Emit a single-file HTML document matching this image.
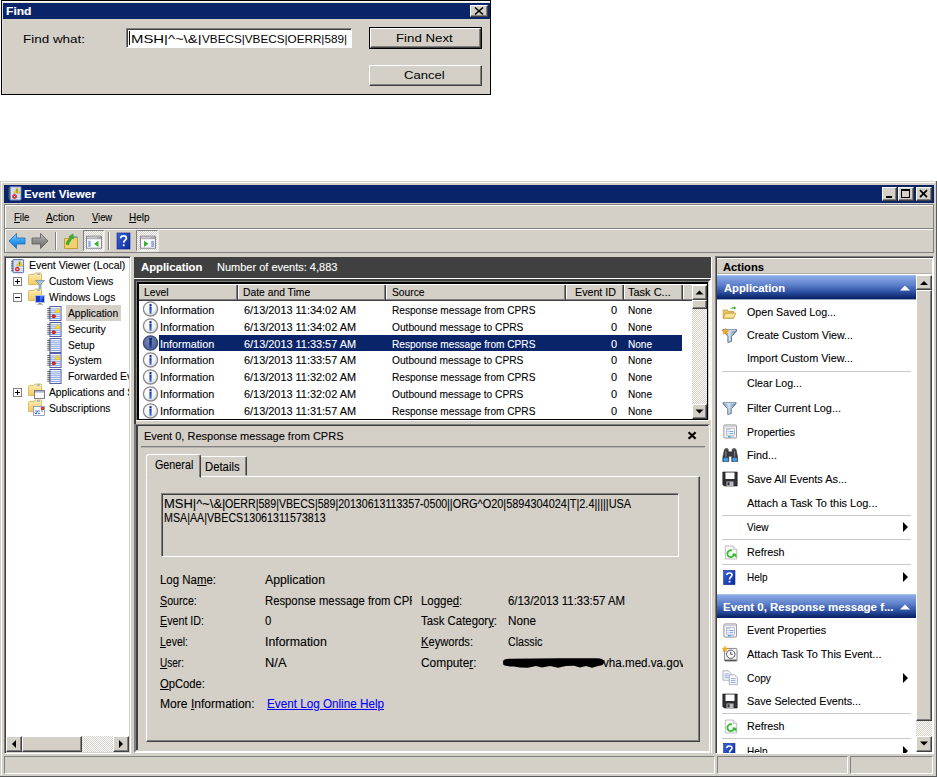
<!DOCTYPE html>
<html>
<head>
<meta charset="utf-8">
<title>Event Viewer</title>
<style>
*{box-sizing:border-box;margin:0;padding:0}
html,body{width:937px;height:777px;background:#fff;overflow:hidden}
body{font-family:"Liberation Sans",sans-serif;font-size:11px;color:#000;position:relative}
.a{position:absolute}
.t{position:absolute;white-space:nowrap;line-height:14px;height:14px;-webkit-text-stroke:.1px currentColor}
.b{font-weight:bold}
.f{-webkit-text-stroke:0}
.n{transform:scaleX(.935);transform-origin:0 0}
.nr{transform:scaleX(.935);transform-origin:100% 0}
.w{color:#fff}
u{text-decoration:underline}
/* classic raised button */
.btn{position:absolute;background:#d4d0c8;border:1px solid;border-color:#fff #404040 #404040 #fff;box-shadow:inset -1px -1px 0 #808080}
.sunk{position:absolute;border:1px solid;border-color:#808080 #fff #fff #808080}
.dot{background-image:repeating-conic-gradient(#fff 0 25%,#d4d0c8 0 50%);background-size:2px 2px}
/* find dialog */
#find{left:1px;top:0;width:490px;height:95px;background:#d4d0c8;border:1px solid #000}
.ft{letter-spacing:1.1px}
/* main window */
#win{left:0;top:181px;width:937px;height:596px;background:#d4d0c8}
.s12{font-size:12px;line-height:15px;height:15px}
</style>
</head>
<body>

<!-- ================= FIND DIALOG ================= -->
<div id="find" class="a"></div>
<div class="a" style="left:2px;top:1px;width:488px;height:1px;background:#fff"></div><div class="a" style="left:2px;top:2px;width:488px;height:1px;background:#e8e6e0"></div>
<div class="a" style="left:2px;top:2px;width:1px;height:92px;background:#e0ded6"></div>
<div class="a" style="left:3px;top:3px;width:487px;height:16px;background:#0a246a"></div>
<div class="t b w" style="left:5.500px;top:4px;transform:scaleX(1.0983);transform-origin:0 0">Find</div>
<div class="btn" style="left:470px;top:5px;width:18px;height:12px"></div>
<svg class="a" style="left:470px;top:5px" width="18" height="12"><path d="M5 2.5 L13 9.5 M13 2.5 L5 9.5" stroke="#000" stroke-width="1.6" fill="none"/></svg>
<div class="t f" style="left:23.400px;top:32px;transform:scaleX(1.2217);transform-origin:0 0">Find what:</div>
<div class="a" style="left:126px;top:28px;width:226px;height:20px;background:#fff;border:1px solid;border-color:#808080 #fff #fff #808080;box-shadow:inset 1px 1px 0 #404040"></div>
<div class="t f" style="left:130.800px;top:32px;transform:scaleX(1.3521);transform-origin:0 0">MSH|^~\&amp;|</div><div class="t f" style="left:201.700px;top:32px;transform:scaleX(1.0650);transform-origin:0 0">VBECS|VBECS|OERR|589|</div>
<div class="a" style="left:129px;top:31px;width:1px;height:14px;background:#000"></div>
<div class="a" style="left:369px;top:27px;width:113px;height:22px;border:1px solid #000"></div>
<div class="btn" style="left:370px;top:28px;width:111px;height:20px"></div>
<div class="t f" style="left:396px;top:31px;transform:scaleX(1.2044);transform-origin:0 0">Find Next</div>
<div class="btn" style="left:369px;top:65px;width:113px;height:21px"></div>
<div class="t f" style="left:403.800px;top:68px;transform:scaleX(1.1883);transform-origin:0 0">Cancel</div>

<!-- ================= MAIN WINDOW ================= -->
<div id="win" class="a"></div>
<!-- frame edges -->
<div class="a" style="left:1px;top:182px;width:934px;height:1px;background:#fff"></div>
<div class="a" style="left:1px;top:182px;width:1px;height:593px;background:#fff"></div>
<div class="a" style="left:936px;top:181px;width:1px;height:596px;background:#5a5a5a"></div>
<div class="a" style="left:0;top:776px;width:937px;height:1px;background:#5a5a5a"></div>
<!-- title bar -->
<div class="a" style="left:4px;top:185px;width:930px;height:18px;background:#0a246a"></div>
<svg class="a" style="left:6.500px;top:186.300px" width="15.500" height="15.500" viewBox="0 0 16 16"><use href="#evroot"/></svg>
<div class="t b w" style="left:24.300px;top:187px;transform:scaleX(1.0501);transform-origin:0 0">Event Viewer</div>
<div class="btn" style="left:882px;top:187px;width:15px;height:14px"></div>
<div class="a" style="left:886px;top:196px;width:6px;height:2px;background:#000"></div>
<div class="btn" style="left:898px;top:187px;width:16px;height:14px"></div>
<div class="a" style="left:901px;top:189px;width:9px;height:9px;border:1px solid #000;border-top-width:2px"></div>
<div class="btn" style="left:916px;top:187px;width:16px;height:14px"></div>
<svg class="a" style="left:916px;top:187px" width="16" height="14"><path d="M4 3.2 L11 10.2 M11 3.2 L4 10.2" stroke="#000" stroke-width="1.7" fill="none"/></svg>
<!-- menu band -->
<div class="a" style="left:4px;top:204px;width:930px;height:25px;border:1px solid;border-color:#808080 #808080 #808080 #808080;box-shadow:inset 1px 1px 0 #fff"></div>
<div class="t" style="left:14px;top:210px;transform:scaleX(0.8676);transform-origin:0 0"><u>F</u>ile</div>
<div class="t" style="left:46.400px;top:210px;transform:scaleX(0.9250);transform-origin:0 0"><u>A</u>ction</div>
<div class="t" style="left:91.500px;top:210px;transform:scaleX(0.8497);transform-origin:0 0"><u>V</u>iew</div>
<div class="t" style="left:128.700px;top:210px;transform:scaleX(0.9055);transform-origin:0 0"><u>H</u>elp</div>
<!-- toolbar band -->
<div class="a" style="left:4px;top:228px;width:930px;height:25px;border:1px solid #808080;box-shadow:inset 1px 1px 0 #fff"></div>
<!-- toolbar icons -->
<svg class="a" style="left:6px;top:230px" width="160" height="22" viewBox="0 0 160 22">
 <defs>
  <linearGradient id="gb" x1="0" y1="0" x2="0" y2="1"><stop offset="0" stop-color="#8fd0ff"/><stop offset=".5" stop-color="#2f9cf0"/><stop offset="1" stop-color="#1672c8"/></linearGradient>
  <linearGradient id="gg" x1="0" y1="0" x2="0" y2="1"><stop offset="0" stop-color="#c8c8c8"/><stop offset=".5" stop-color="#8c8c8c"/><stop offset="1" stop-color="#6e6e6e"/></linearGradient>
  <linearGradient id="gh" x1="0" y1="0" x2="1" y2="1"><stop offset="0" stop-color="#3a66d8"/><stop offset="1" stop-color="#0a2a9a"/></linearGradient>
  <pattern id="dp" width="2" height="2" patternUnits="userSpaceOnUse"><rect width="2" height="2" fill="#d4d0c8"/><rect width="1" height="1" fill="#fff"/><rect x="1" y="1" width="1" height="1" fill="#fff"/></pattern>
 </defs>
 <!-- back -->
 <path d="M3 11 L10.5 3.5 V8 H19 V14 H10.5 V18.5 Z" fill="url(#gb)" stroke="#1a6fc0" stroke-width=".8"/>
 <!-- forward -->
 <path d="M42 11 L34.5 3.5 V8 H26 V14 H34.5 V18.5 Z" fill="url(#gg)" stroke="#5a5a5a" stroke-width=".8"/>
 <!-- sep -->
 <rect x="49" y="2" width="1" height="18" fill="#808080"/><rect x="50" y="2" width="1" height="18" fill="#fff"/>
 <!-- folder up -->
 <path d="M58.5 8.5 H63 L64 7 H71.5 V18.5 H58.5 Z" fill="#f0d070" stroke="#c09a30" stroke-width=".9"/>
 <path d="M60 14 C61 10 63 9.5 64.5 7.5 L62.8 6.8 L67 4 L67.5 9 L66 8.3 C65 11 63 12 62.5 15 Z" fill="#3ab030" stroke="#2a8a20" stroke-width=".5"/>
 <rect x="68" y="6.5" width="3" height="1.2" fill="#4a90e0"/>
 <!-- checked button 1 -->
 <rect x="77" y="0" width="21" height="21" fill="url(#dp)"/>
 <path d="M77.5 21 V.5 H98" stroke="#808080" fill="none"/><path d="M98 .5 V21 H77.5" stroke="#fff" fill="none" transform="translate(0,0)"/>
 <rect x="80.5" y="6.200" width="15" height="12" fill="#fafafa" stroke="#86868c"/>
 <rect x="81" y="6.700" width="14" height="2.500" fill="#a8a8ae"/><rect x="81" y="7.400" width="10" height=".8" fill="#e0e0e4"/>
 <rect x="81.500" y="10.200" width="4" height="7.500" fill="#e8ecf4"/>
 <path d="M82.300 12H84.700M82.300 14H84.700M82.300 16H84.700" stroke="#3a70d8" stroke-width="1"/>
 <path d="M92.500 10.700 V17 L88 13.800 Z" fill="#38b030"/>
 <!-- sep2 -->
 <rect x="102" y="2" width="1" height="18" fill="#808080"/><rect x="103" y="2" width="1" height="18" fill="#fff"/>
 <!-- help -->
 <rect x="111" y="3" width="13" height="16" fill="url(#gh)" stroke="#0a1f80" stroke-width=".6"/>
 <path d="M114.800 8.200 C114.800 5.200 120.400 5.200 120.400 8.200 C120.400 10.200 117.700 10.300 117.700 12.800" fill="none" stroke="#fff" stroke-width="1.700"/>
 <rect x="116.800" y="14.300" width="1.800" height="1.900" fill="#fff"/>
 <!-- checked button 2 -->
 <rect x="130" y="0" width="22" height="21" fill="url(#dp)"/>
 <path d="M130.500 21 V.5 H152" stroke="#808080" fill="none"/><path d="M152 .5 V21 H130.500" stroke="#fff" fill="none"/>
 <rect x="134.500" y="6.200" width="15" height="12" fill="#fafafa" stroke="#86868c"/>
 <rect x="135" y="6.700" width="14" height="2.500" fill="#a8a8ae"/><rect x="135" y="7.400" width="10" height=".8" fill="#e0e0e4"/>
 <rect x="144.500" y="10.200" width="4.500" height="7.500" fill="#e8ecf4"/>
 <path d="M145.300 12H148M145.300 14H148M145.300 16H148" stroke="#3a70d8" stroke-width="1"/>
 <path d="M138 10.700 V17 L142.500 13.800 Z" fill="#38b030"/>
</svg>
<!-- svg symbol defs -->
<svg width="0" height="0" style="position:absolute">
 <defs>
  <linearGradient id="fg" x1="0" y1="0" x2="0" y2="1"><stop offset="0" stop-color="#fdf0b8"/><stop offset="1" stop-color="#f0c860"/></linearGradient>
  <symbol id="folder" viewBox="0 0 16 16">
   <path d="M.5 3.500 Q.5 2.500 1.500 2.500 H6 L7 1 H13 Q13.500 1 13.500 1.800 V12.500 H.5Z" fill="url(#fg)" stroke="#d8b050" stroke-width=".8"/>
   <rect x="9" y="1.600" width="3" height="1" fill="#58a0f0"/>
  </symbol>
  <symbol id="log" viewBox="0 0 16 16">
   <rect x="3" y=".5" width="11.500" height="14.500" fill="#fff" stroke="#4a5aa4" stroke-width="1"/>
   <path d="M4 3H14M4 5H14M4 7H14M4 9H14M4 11H14M4 13H14" stroke="#6088d8" stroke-width=".85"/>
   <path d="M.3 2.500H3.800M.3 4.500H3.800M.3 6.500H3.800M.3 8.500H3.800M.3 10.500H3.800M.3 12.500H3.800" stroke="#48484c" stroke-width=".95"/>
  </symbol>
  <symbol id="logw" viewBox="0 0 16 16">
   <use href="#log"/>
   <path d="M11 1.800L13.800 6.800H8.200Z" fill="#f8dc28" stroke="#e4b400" stroke-width=".4"/>
   <circle cx="7" cy="10.600" r="2.100" fill="#cc2830"/>
  </symbol>
  <symbol id="evroot" viewBox="0 0 16 16">
   <rect x="3" y=".6" width="11.500" height="14" rx=".8" fill="#c4d4f0" stroke="#5468a8" stroke-width="1"/>
   <path d="M4 3H14M4 5H14M4 7H14M4 9H14M4 11H14M4 13H14" stroke="#e4ecfa" stroke-width=".9"/>
   <path d="M1 2.500H3.600M1 4.500H3.600M1 6.500H3.600M1 8.500H3.600M1 10.500H3.600M1 12.500H3.600" stroke="#5a5a60" stroke-width="1"/>
   <path d="M10.300 1.800L13.400 7.300H7.200Z" fill="#f8dc28" stroke="#c8a000" stroke-width=".5"/>
   <rect x="9.850" y="3.600" width=".9" height="2.200" fill="#333"/><rect x="9.850" y="6.100" width=".9" height=".7" fill="#333"/>
   <circle cx="7.800" cy="10.800" r="2.300" fill="#d8232a" stroke="#b01018" stroke-width=".3"/>
   <path d="M7 10L8.600 11.600M8.600 10L7 11.600" stroke="#fff" stroke-width=".8"/>
  </symbol>
  <radialGradient id="inorm" cx=".38" cy=".35" r=".75"><stop offset="0" stop-color="#fff"/><stop offset=".6" stop-color="#f4f4f6"/><stop offset="1" stop-color="#c0c0c6"/></radialGradient>
  <radialGradient id="isel" cx=".4" cy=".4" r=".7"><stop offset="0" stop-color="#7686b6"/><stop offset="1" stop-color="#4c5c90"/></radialGradient>
  <linearGradient id="ib" x1="0" y1="0" x2="0" y2="1"><stop offset="0" stop-color="#1434a4"/><stop offset="1" stop-color="#4a7ce4"/></linearGradient>
  <linearGradient id="ibs" x1="0" y1="0" x2="0" y2="1"><stop offset="0" stop-color="#0a1f66"/><stop offset="1" stop-color="#2c4ca8"/></linearGradient>
  <symbol id="info" viewBox="0 0 17 17">
   <circle cx="8.500" cy="8.900" r="7.100" fill="url(#inorm)" stroke="#8a8a8e" stroke-width="1.300"/>
   <rect x="7.400" y="6.500" width="2.200" height="7.300" fill="url(#ib)"/><rect x="7.400" y="4.100" width="2.200" height="1.900" fill="#1434a4"/>
  </symbol>
  <symbol id="infos" viewBox="0 0 17 17">
   <circle cx="8.500" cy="8.900" r="7.100" fill="url(#isel)" stroke="#3c4a78" stroke-width="1.300"/>
   <rect x="7.300" y="6.400" width="2.500" height="7.500" fill="url(#ibs)"/><rect x="7.300" y="4" width="2.500" height="2" fill="#0a1f66"/>
  </symbol>
  <linearGradient id="fun" x1="0" y1="0" x2="1" y2="0"><stop offset="0" stop-color="#6c8cb0"/><stop offset=".45" stop-color="#d4e4f4"/><stop offset="1" stop-color="#5c7c9c"/></linearGradient>
  <symbol id="funnel" viewBox="0 0 16 16">
   <path d="M.8 1.800 H15.200 V3 L9.900 8.500 V13.800 L6.100 15 V8.500 L.8 3 Z" fill="url(#fun)" stroke="#486480" stroke-width=".9"/>
   <path d="M1.500 2.400H14.500" stroke="#dce8f4" stroke-width=".9"/>
  </symbol>
  <symbol id="funstar" viewBox="0 0 16 16">
   <use href="#funnel"/>
   <path d="M3.500 0L4.500 2.200L7 2.500L5.200 4.200L5.800 6.800L3.500 5.400L1.200 6.800L1.800 4.200L0 2.500L2.500 2.200Z" fill="#ffa818" stroke="#e88800" stroke-width=".3"/>
  </symbol>
  <symbol id="openf" viewBox="0 0 16 16">
   <path d="M1 14.500V5.500H5.500L6.500 7H12.500V14.500Z" fill="#e8c868" stroke="#b89030" stroke-width=".8"/>
   <path d="M1 14.500L3.500 9H15L12.500 14.500Z" fill="#f8e498" stroke="#b89030" stroke-width=".8"/>
   <path d="M9 4.500C10 2.500 12 2.300 13 2.800V1.300L15.500 3.300L13 5.300V4C12 3.600 10.500 3.600 9 4.500Z" fill="#38b030"/>
  </symbol>
  <symbol id="props" viewBox="0 0 16 16">
   <rect x="1" y=".8" width="14" height="14.400" rx="1.300" fill="#fafafc" stroke="#84848c" stroke-width="1"/>
   <rect x="1.800" y="1.600" width="12.400" height="1.800" fill="#d0d0d8"/>
   <rect x="3.800" y="5" width="9" height="7" fill="#fff" stroke="#9098b0" stroke-width=".7"/>
   <rect x="4.500" y="5.400" width="3.500" height="1.300" fill="#c0c4d0"/>
   <path d="M5 8H6M7 8H11.500M5 10H6M7 10H11.500" stroke="#5888e0" stroke-width=".9"/>
   <rect x="5.500" y="13" width="3" height="1.500" fill="#20a8f0"/><rect x="9" y="13" width="3" height="1.500" fill="#c8c8d0"/>
  </symbol>
  <symbol id="binoc" viewBox="0 0 17 17">
   <path d="M2.500 2.500H6.500V5H10.500V2.500H14.500L16.200 11V15H10V9.500H7V15H.8V11Z" fill="#3a3a40" stroke="#222" stroke-width=".5"/>
   <rect x="3.200" y="1.200" width="2.800" height="2" fill="#555"/><rect x="11" y="1.200" width="2.800" height="2" fill="#555"/>
   <path d="M4 4V10M13 4V10" stroke="#8a8a90" stroke-width="1.100"/>
   <ellipse cx="3.900" cy="13" rx="2.600" ry="2.200" fill="#38a0f0"/><ellipse cx="13.100" cy="13" rx="2.600" ry="2.200" fill="#38a0f0"/>
  </symbol>
  <symbol id="floppy" viewBox="0 0 16 16">
   <path d="M.8 1H15.200V15H2.300L.8 13.500Z" fill="#303034" stroke="#111" stroke-width=".6"/>
   <rect x="3.500" y="1.500" width="9" height="6.500" fill="#fff"/>
   <rect x="4.500" y="10.500" width="7" height="4.500" fill="#b8b8c0"/><rect x="5.500" y="11.300" width="2" height="3" fill="#303034"/>
  </symbol>
  <symbol id="refresh" viewBox="0 0 16 16">
   <path d="M1.500 .6H10.500L14.500 4.600V15.400H1.500Z" fill="#fcfcfc" stroke="#a4a4ac" stroke-width=".8"/>
   <path d="M10.500 .6V4.600H14.500" fill="#e4e4e8" stroke="#a4a4ac" stroke-width=".6"/>
   <path d="M11.600 9.200A3.900 3.900 0 1 1 9 5.700" fill="none" stroke="#38bc30" stroke-width="2.200"/>
   <path d="M8.600 9.300H14.200V14Z" fill="#38bc30"/>
  </symbol>
  <symbol id="helpi" viewBox="0 0 13 16">
   <rect x=".4" y=".4" width="12.200" height="15.200" fill="url(#gh)" stroke="#0a1f80" stroke-width=".6"/>
   <path d="M3.800 5.400C3.800 2.400 9.400 2.400 9.400 5.400C9.400 7.400 6.700 7.500 6.700 10" fill="none" stroke="#fff" stroke-width="1.700"/>
   <rect x="5.800" y="11.500" width="1.800" height="1.900" fill="#fff"/>
  </symbol>
  <symbol id="clock" viewBox="0 0 17 17">
   <rect x="2.500" y="2.500" width="13" height="13" rx="1" fill="#f4f4f6" stroke="#7a7a82" stroke-width=".9"/>
   <rect x="3" y="14" width="12" height="1.500" fill="#555"/>
   <circle cx="9" cy="8.500" r="4.300" fill="#fff" stroke="#50505a" stroke-width="1"/>
   <path d="M9 5.800V8.500H11" stroke="#333" stroke-width=".9" fill="none"/>
   <path d="M3 0L3.900 2L6 2.300L4.500 3.800L5 6L3 4.800L1 6L1.500 3.800L0 2.300L2.100 2Z" fill="#ffa818" stroke="#e88800" stroke-width=".3"/>
  </symbol>
  <symbol id="copy" viewBox="0 0 17 16">
   <path d="M1 .8H6.500L9 3.300V10.500H1Z" fill="#fff" stroke="#9098a8" stroke-width=".8"/>
   <path d="M2.500 4H7M2.500 6H7M2.500 8H7" stroke="#6888d8" stroke-width=".8"/>
   <path d="M7.500 5H13L15.800 7.800V15.200H7.500Z" fill="#fff" stroke="#9098a8" stroke-width=".8"/>
   <path d="M9 9H14M9 11H14M9 13H14" stroke="#6888d8" stroke-width=".8"/>
  </symbol>
 </defs>
</svg>
<!-- tree pane -->
<div class="a" style="left:4px;top:256px;width:127px;height:498px;background:#fff;border:1px solid;border-color:#808080 #fff #fff #808080;box-shadow:inset 1px 1px 0 #404040,inset -1px -1px 0 #d4d0c8"></div>
<div class="a" style="left:66px;top:305px;width:55px;height:16px;background:#d4d0c8"></div>
<div class="a" style="left:6px;top:258px;width:123px;height:160px;overflow:hidden">
 <div class="t" style="left:23.3px;top:0px;transform:scaleX(0.9507);transform-origin:0 0">Event Viewer (Local)</div>
 <div class="t" style="left:42.8px;top:16px;transform:scaleX(0.9186);transform-origin:0 0">Custom Views</div>
 <div class="t" style="left:42.8px;top:32px;transform:scaleX(0.9281);transform-origin:0 0">Windows Logs</div>
 <div class="t" style="left:62.0px;top:48px;transform:scaleX(0.9326);transform-origin:0 0">Application</div>
 <div class="t" style="left:61.5px;top:64px;transform:scaleX(0.9459);transform-origin:0 0">Security</div>
 <div class="t" style="left:61.5px;top:80px;transform:scaleX(0.9252);transform-origin:0 0">Setup</div>
 <div class="t" style="left:61.5px;top:95px;transform:scaleX(0.9213);transform-origin:0 0">System</div>
 <div class="t n" style="left:61.500px;top:111px">Forwarded Ev</div>
 <div class="t n" style="left:42.800px;top:127px">Applications and S</div>
 <div class="t" style="left:42.8px;top:143px;transform:scaleX(0.9312);transform-origin:0 0">Subscriptions</div>
</div>
<svg class="a" style="left:10px;top:259px" width="15" height="15"><use href="#evroot"/></svg>
<!-- expanders -->
<div class="a" style="left:13px;top:277px;width:9px;height:9px;border:1px solid #808080;background:#fff"></div>
<div class="a" style="left:15px;top:281px;width:5px;height:1px;background:#000"></div><div class="a" style="left:17px;top:279px;width:1px;height:5px;background:#000"></div>
<div class="a" style="left:13px;top:293px;width:9px;height:9px;border:1px solid #808080;background:#fff"></div>
<div class="a" style="left:15px;top:297px;width:5px;height:1px;background:#000"></div>
<div class="a" style="left:13px;top:388px;width:9px;height:9px;border:1px solid #808080;background:#fff"></div>
<div class="a" style="left:15px;top:392px;width:5px;height:1px;background:#000"></div><div class="a" style="left:17px;top:390px;width:1px;height:5px;background:#000"></div>
<!-- folder icons -->
<svg class="a" style="left:28px;top:272px" width="18" height="18" viewBox="0 0 18 18"><use href="#folder" width="16" height="16"/>
 <path d="M7.500 8.500H16.500L13 12V16.500H11V12Z" fill="#a8c4dc" stroke="#6888a8" stroke-width=".7"/></svg>
<svg class="a" style="left:28px;top:288px" width="18" height="18" viewBox="0 0 18 18"><use href="#folder" width="16" height="16"/>
 <rect x="7.500" y="7.500" width="9" height="7" fill="#1038d0" stroke="#b8c8e0" stroke-width=".8"/><path d="M12 8V14L16 8Z" fill="#6090f0" opacity=".7"/><rect x="10.500" y="15" width="3" height="1" fill="#999"/><rect x="9" y="16" width="6" height="1" fill="#bbb"/></svg>
<svg class="a" style="left:28px;top:383px" width="18" height="18" viewBox="0 0 18 18"><use href="#folder" width="16" height="16"/>
 <rect x="6.500" y="7.500" width="10" height="8" fill="#fff" stroke="#70707c" stroke-width=".9"/><rect x="7" y="8" width="9" height="1.600" fill="#a8b0d0"/></svg>
<svg class="a" style="left:28px;top:399px" width="18" height="18" viewBox="0 0 18 18"><use href="#folder" width="16" height="16"/>
 <rect x="5.500" y="7.500" width="11" height="9" fill="#fff" stroke="#8890b0" stroke-width=".8"/><rect x="13" y="8" width="3" height="3" fill="#e03030"/><path d="M7 12H9M10 12H12M13 12H15M7 14.500H9M10 14.500H12" stroke="#5080d0" stroke-width="1"/><path d="M6.500 13.500L8 15L10 11.500" stroke="#3050c0" fill="none" stroke-width=".9"/></svg>
<!-- log icons -->
<svg class="a" style="left:47.300px;top:305.7px" width="15.500" height="15.500"><use href="#logw"/></svg>
<svg class="a" style="left:47.300px;top:321.7px" width="15.500" height="15.500"><use href="#logw"/></svg>
<svg class="a" style="left:47.300px;top:337.7px" width="15.500" height="15.500"><use href="#log"/></svg>
<svg class="a" style="left:47.300px;top:352.7px" width="15.500" height="15.500"><use href="#logw"/></svg>
<svg class="a" style="left:47.300px;top:368.7px" width="15.500" height="15.500"><use href="#log"/></svg>
<!-- tree hscroll -->
<div class="a dot" style="left:6px;top:736px;width:123px;height:16px"></div>
<div class="btn" style="left:6px;top:736px;width:16px;height:16px"></div>
<div class="btn" style="left:22px;top:736px;width:60px;height:16px"></div>
<div class="btn" style="left:113px;top:736px;width:16px;height:16px"></div>
<svg class="a" style="left:6px;top:736px" width="123" height="16"><path d="M10 4V12L6 8Z M113 4V12L117 8Z" fill="#000"/></svg>
<!-- middle pane header -->
<div class="a" style="left:134px;top:257px;width:577px;height:21px;background:#404040"></div>
<div class="a" style="left:134px;top:278px;width:577px;height:1px;background:#fff"></div>
<div class="t b w" style="left:141px;top:260px;transform:scaleX(1.0252);transform-origin:0 0">Application</div>
<div class="t w" style="left:217px;top:260px;transform:scaleX(0.9994);transform-origin:0 0">Number of events: 4,883</div>
<!-- list frame -->
<div class="a" style="left:134px;top:279px;width:577px;height:143px;background:#d4d0c8;border:2px solid;border-color:#404040 #fff #d4d0c8 #404040"></div>
<div class="a" style="left:136px;top:281px;width:573px;height:140px;border:1px solid;border-color:#808080 #d4d0c8 #d4d0c8 #808080"></div>
<div class="a" style="left:137px;top:282px;width:571px;height:138px;background:#fff;border:solid #000;border-width:2px 1px 1px 2px"></div>
<!-- list header -->
<div class="a" style="left:139px;top:284px;width:553px;height:16px;background:#d4d0c8;border-top:1px solid #fff;border-bottom:1px solid #808080"></div>
<div class="a" style="left:139px;top:300px;width:553px;height:1px;background:#404040"></div>
<div class="a" style="left:236px;top:285px;width:1px;height:14px;background:#808080"></div><div class="a" style="left:237px;top:285px;width:1px;height:15px;background:#404040"></div><div class="a" style="left:238px;top:285px;width:1px;height:14px;background:#fff"></div>
<div class="a" style="left:384px;top:285px;width:1px;height:14px;background:#808080"></div><div class="a" style="left:385px;top:285px;width:1px;height:15px;background:#404040"></div><div class="a" style="left:386px;top:285px;width:1px;height:14px;background:#fff"></div>
<div class="a" style="left:564px;top:285px;width:1px;height:14px;background:#808080"></div><div class="a" style="left:565px;top:285px;width:1px;height:15px;background:#404040"></div><div class="a" style="left:566px;top:285px;width:1px;height:14px;background:#fff"></div>
<div class="a" style="left:622px;top:285px;width:1px;height:14px;background:#808080"></div><div class="a" style="left:623px;top:285px;width:1px;height:15px;background:#404040"></div><div class="a" style="left:624px;top:285px;width:1px;height:14px;background:#fff"></div>
<div class="a" style="left:681px;top:285px;width:1px;height:14px;background:#808080"></div><div class="a" style="left:682px;top:285px;width:1px;height:15px;background:#404040"></div><div class="a" style="left:683px;top:285px;width:1px;height:14px;background:#fff"></div>
<div class="t n" style="left:144px;top:285px">Level</div>
<div class="t" style="left:243px;top:285px;transform:scaleX(0.9392);transform-origin:0 0">Date and Time</div>
<div class="t n" style="left:392px;top:285px">Source</div>
<div class="t" style="left:575px;top:285px;transform:scaleX(0.9719);transform-origin:0 0">Event ID</div>
<div class="t" style="left:628px;top:285px;transform:scaleX(1.0001);transform-origin:0 0">Task C...</div>
<!-- selected row -->
<div class="a" style="left:159px;top:335px;width:523px;height:16px;background:#0a246a"></div>
<div class="t" style="left:160px;top:303px;transform:scaleX(0.9867);transform-origin:0 0">Information</div><div class="t" style="left:244px;top:303px;transform:scaleX(0.9916);transform-origin:0 0">6/13/2013 11:34:02 AM</div><div class="t" style="left:392px;top:303px;transform:scaleX(0.9198);transform-origin:0 0">Response message from CPRS</div><div class="t" style="left:596px;top:303px;width:21px;text-align:right">0</div><div class="t" style="left:628px;top:303px;transform:scaleX(0.9127);transform-origin:0 0">None</div>
<svg class="a" style="left:142.200px;top:300px" width="17" height="17"><use href="#info"/></svg>
<div class="t" style="left:160px;top:320px;transform:scaleX(0.9867);transform-origin:0 0">Information</div><div class="t" style="left:244px;top:320px;transform:scaleX(0.9916);transform-origin:0 0">6/13/2013 11:34:02 AM</div><div class="t" style="left:392px;top:320px;transform:scaleX(0.9263);transform-origin:0 0">Outbound message to CPRS</div><div class="t" style="left:596px;top:320px;width:21px;text-align:right">0</div><div class="t" style="left:628px;top:320px;transform:scaleX(0.9127);transform-origin:0 0">None</div>
<svg class="a" style="left:142.200px;top:317px" width="17" height="17"><use href="#info"/></svg>
<div class="t w" style="left:160px;top:337px;transform:scaleX(0.9867);transform-origin:0 0">Information</div><div class="t w" style="left:244px;top:337px;transform:scaleX(0.9916);transform-origin:0 0">6/13/2013 11:33:57 AM</div><div class="t w" style="left:392px;top:337px;transform:scaleX(0.9198);transform-origin:0 0">Response message from CPRS</div><div class="t w" style="left:596px;top:337px;width:21px;text-align:right">0</div><div class="t w" style="left:628px;top:337px;transform:scaleX(0.9127);transform-origin:0 0">None</div>
<svg class="a" style="left:142.200px;top:334px" width="17" height="17"><use href="#infos"/></svg>
<div class="t" style="left:160px;top:353px;transform:scaleX(0.9867);transform-origin:0 0">Information</div><div class="t" style="left:244px;top:353px;transform:scaleX(0.9916);transform-origin:0 0">6/13/2013 11:33:57 AM</div><div class="t" style="left:392px;top:353px;transform:scaleX(0.9263);transform-origin:0 0">Outbound message to CPRS</div><div class="t" style="left:596px;top:353px;width:21px;text-align:right">0</div><div class="t" style="left:628px;top:353px;transform:scaleX(0.9127);transform-origin:0 0">None</div>
<svg class="a" style="left:142.200px;top:351px" width="17" height="17"><use href="#info"/></svg>
<div class="t" style="left:160px;top:370px;transform:scaleX(0.9867);transform-origin:0 0">Information</div><div class="t" style="left:244px;top:370px;transform:scaleX(0.9916);transform-origin:0 0">6/13/2013 11:32:02 AM</div><div class="t" style="left:392px;top:370px;transform:scaleX(0.9198);transform-origin:0 0">Response message from CPRS</div><div class="t" style="left:596px;top:370px;width:21px;text-align:right">0</div><div class="t" style="left:628px;top:370px;transform:scaleX(0.9127);transform-origin:0 0">None</div>
<svg class="a" style="left:142.200px;top:368px" width="17" height="17"><use href="#info"/></svg>
<div class="t" style="left:160px;top:387px;transform:scaleX(0.9867);transform-origin:0 0">Information</div><div class="t" style="left:244px;top:387px;transform:scaleX(0.9916);transform-origin:0 0">6/13/2013 11:32:02 AM</div><div class="t" style="left:392px;top:387px;transform:scaleX(0.9263);transform-origin:0 0">Outbound message to CPRS</div><div class="t" style="left:596px;top:387px;width:21px;text-align:right">0</div><div class="t" style="left:628px;top:387px;transform:scaleX(0.9127);transform-origin:0 0">None</div>
<svg class="a" style="left:142.200px;top:385px" width="17" height="17"><use href="#info"/></svg>
<div class="t" style="left:160px;top:404px;transform:scaleX(0.9867);transform-origin:0 0">Information</div><div class="t" style="left:244px;top:404px;transform:scaleX(0.9916);transform-origin:0 0">6/13/2013 11:31:57 AM</div><div class="t" style="left:392px;top:404px;transform:scaleX(0.9198);transform-origin:0 0">Response message from CPRS</div><div class="t" style="left:596px;top:404px;width:21px;text-align:right">0</div><div class="t" style="left:628px;top:404px;transform:scaleX(0.9127);transform-origin:0 0">None</div>
<svg class="a" style="left:142.200px;top:402px" width="17" height="17"><use href="#info"/></svg>
<!-- cover below list (clip last row) -->
<div class="a" style="left:139px;top:419px;width:569px;height:1px;background:#000"></div>
<div class="a" style="left:134px;top:420px;width:577px;height:4px;background:#d4d0c8"></div>
<div class="a" style="left:134px;top:420px;width:2px;height:4px;background:#404040"></div>
<div class="a" style="left:136px;top:420px;width:573px;height:1px;background:#fff"></div>
<!-- list vscroll -->
<div class="a dot" style="left:692px;top:285px;width:15px;height:134px"></div>
<div class="btn" style="left:692px;top:285px;width:15px;height:15px"></div>
<div class="btn" style="left:692px;top:300px;width:15px;height:9px"></div>
<div class="btn" style="left:692px;top:404px;width:15px;height:15px"></div>
<svg class="a" style="left:692px;top:285px" width="15" height="134"><path d="M3.500 9.500H11.500L7.500 5.500Z M3.500 124.500H11.500L7.500 128.500Z" fill="#000"/></svg>
<!-- detail pane -->
<div class="a" style="left:134px;top:424px;width:576px;height:329px;background:#d4d0c8;border:solid;border-width:1px 1px 2px 2px;border-color:#808080 #fff #fff #808080"></div>
<div class="a" style="left:136px;top:425px;width:572px;height:1px;background:#404040"></div>
<div class="a" style="left:136px;top:425px;width:2px;height:325px;background:#404040"></div>
<div class="t" style="left:144px;top:429px;transform:scaleX(1.0009);transform-origin:0 0">Event 0, Response message from CPRS</div>
<svg class="a" style="left:687px;top:431px" width="11" height="9"><path d="M1.600 1.200 L8.600 7.800 M8.600 1.200 L1.600 7.800" stroke="#000" stroke-width="2.200" fill="none"/></svg>
<div class="a" style="left:141px;top:446px;width:564px;height:1px;background:#808080"></div>
<div class="a" style="left:141px;top:447px;width:564px;height:1px;background:#a0a0a0;opacity:.6"></div>
<!-- tab page -->
<div class="a" style="left:146px;top:476px;width:554px;height:266px;border:1px solid;border-color:#fff #404040 #404040 #fff;box-shadow:inset -1px -1px 0 #808080"></div>
<!-- details tab -->
<div class="a" style="left:200px;top:456px;width:47px;height:20px;border:1px solid;border-color:#fff #404040 transparent #fff;border-radius:2px 2px 0 0;box-shadow:inset -1px 0 0 #808080"></div>
<div class="t s12" style="left:205px;top:460px;transform:scaleX(0.9431);transform-origin:0 0">Details</div>
<!-- general tab -->
<div class="a" style="left:146px;top:454px;width:55px;height:24px;background:#d4d0c8;border:1px solid;border-color:#fff #404040 transparent #fff;border-radius:3px 3px 0 0;box-shadow:inset -1px 0 0 #808080"></div>
<div class="a" style="left:147px;top:476px;width:52px;height:2px;background:#d4d0c8"></div>
<div class="t s12" style="left:154.500px;top:457.500px;transform:scaleX(0.8969);transform-origin:0 0">General</div>
<!-- message box -->
<div class="a" style="left:161px;top:493px;width:518px;height:64px;border:1px solid;border-color:#808080 #fff #fff #808080;box-shadow:inset 1px 1px 0 #404040"></div>
<div class="t s12" style="left:163.500px;top:496.500px;transform:scaleX(1.0810);transform-origin:0 0">MSH|^~\&amp;|</div><div class="t s12" style="left:225px;top:496.500px;transform:scaleX(0.8849);transform-origin:0 0">OERR|589|VBECS|589|20130613113357-0500</div><div class="t s12" style="left:447.200px;top:496.500px;transform:scaleX(0.9103);transform-origin:0 0">||ORG^O20|5894304024|T|2.4|||||USA</div>
<div class="t s12" style="left:163.500px;top:510.500px;transform:scaleX(0.8910);transform-origin:0 0">MSA|AA|VBECS13061311573813</div>
<div class="t s12" style="left:159.5px;top:573px;transform:scaleX(0.9537);transform-origin:0 0">Log Na<u>m</u>e:</div>
<div class="t s12" style="left:264.5px;top:573px;transform:scaleX(1.0218);transform-origin:0 0">Application</div>
<div class="t s12" style="left:159.5px;top:594px;transform:scaleX(0.8894);transform-origin:0 0"><u>S</u>ource:</div>
<div class="a" style="left:264px;top:590px;width:148px;height:20px;overflow:hidden"><div class="t s12" style="left:0.500px;top:4px;transform:scaleX(0.9407);transform-origin:0 0">Response message from CPRS</div></div>
<div class="t s12" style="left:421.2px;top:594px;transform:scaleX(0.9515);transform-origin:0 0">Logge<u>d</u>:</div>
<div class="t s12" style="left:507.6px;top:594px;transform:scaleX(0.9495);transform-origin:0 0">6/13/2013 11:33:57 AM</div>
<div class="t s12" style="left:159.5px;top:614px;transform:scaleX(0.8911);transform-origin:0 0"><u>E</u>vent ID:</div>
<div class="t s12" style="left:264.5px;top:614px;transform:scaleX(0.9421);transform-origin:0 0">0</div>
<div class="t s12" style="left:421.2px;top:614px;transform:scaleX(0.9494);transform-origin:0 0">Task Categor<u>y</u>:</div>
<div class="t s12" style="left:508px;top:614px;transform:scaleX(0.9760);transform-origin:0 0">None</div>
<div class="t s12" style="left:159.5px;top:635px;transform:scaleX(0.8737);transform-origin:0 0"><u>L</u>evel:</div>
<div class="t s12" style="left:264.5px;top:635px;transform:scaleX(1.0295);transform-origin:0 0">Information</div>
<div class="t s12" style="left:421.2px;top:635px;transform:scaleX(0.9278);transform-origin:0 0"><u>K</u>eywords:</div>
<div class="t s12" style="left:508px;top:635px;transform:scaleX(0.8895);transform-origin:0 0">Classic</div>
<div class="t s12" style="left:159.5px;top:656px;transform:scaleX(0.8366);transform-origin:0 0"><u>U</u>ser:</div>
<div class="t s12" style="left:264.5px;top:656px;transform:scaleX(1.0742);transform-origin:0 0">N/A</div>
<div class="t s12" style="left:421.2px;top:656px;transform:scaleX(0.9920);transform-origin:0 0">Compute<u>r</u>:</div>
<div class="a" style="left:500px;top:652px;width:183px;height:20px;overflow:hidden"><div class="t s12" style="left:103px;top:3.800px;transform:scaleX(0.9679);transform-origin:0 0">vha.med.va.gov</div></div>
<svg class="a" style="left:500px;top:654.500px" width="110" height="18"><path d="M3 6.500 Q3.500 3.800 9 3.800 L60 3.300 L97 3.200 Q104 3.400 104.200 7 Q104 10.500 99 10.800 L92 12.800 L86 11 L80 12.500 L74 10.800 L66 11 L58 12.800 L50 11 L42 12.600 L36 11 L28 12.800 L20 12.500 L14 11.500 Q5 11.500 3.200 9.500 Z" fill="#000"/></svg>
<div class="t s12" style="left:159.5px;top:677px;transform:scaleX(0.9366);transform-origin:0 0"><u>O</u>pCode:</div>
<div class="t s12" style="left:159.5px;top:697px;transform:scaleX(1.0068);transform-origin:0 0">More <u>I</u>nformation:</div>
<div class="t s12" style="left:267px;top:697px;color:#0000ff;transform:scaleX(0.9744);transform-origin:0 0"><u>Event Log Online Help</u></div>
<!-- actions pane -->
<div class="a" style="left:711px;top:257px;width:1px;height:496px;background:#fff"></div>
<div class="a" style="left:715px;top:256px;width:219px;height:498px;background:#fff;border:1px solid;border-color:#808080 #fff #fff #808080;box-shadow:inset 1px 1px 0 #404040"></div>
<div class="a" style="left:717px;top:258px;width:215px;height:16px;background:#d4d0c8;border-top:1px solid #fff;border-bottom:1px solid #b4b0a8"></div>
<div class="t b" style="left:722.600px;top:260px;transform:scaleX(1.0163);transform-origin:0 0">Actions</div>
<div class="a" style="left:717px;top:275px;width:199px;height:24px;background:linear-gradient(#b4ccf6 0%,#8aa8e4 6%,#5f82cc 40%,#2c4ea0 72%,#0a246a 96%)"></div>
<div class="a" style="left:717px;top:299px;width:199px;height:1px;background:#9da7c3"></div>
<div class="t b w" style="left:723.600px;top:281px;transform:scaleX(1.0185);transform-origin:0 0">Application</div>
<div class="a" style="left:717px;top:594px;width:199px;height:24px;background:linear-gradient(#b4ccf6 0%,#8aa8e4 6%,#5f82cc 40%,#2c4ea0 72%,#0a246a 96%)"></div>
<div class="t b w" style="left:723.400px;top:600px;transform:scaleX(1.0405);transform-origin:0 0">Event 0, Response message f...</div>
<svg class="a" style="left:717px;top:276px" width="199" height="480"><path d="M183 14.500H193L188 9.500Z M183 333.500H193L188 328.500Z" fill="#fff"/>
<path d="M186 246V256L191 251Z M186 296V306L191 301Z M186 397V407L191 402Z" fill="#000"/>
<path d="M5 95.500H194 M5 239.500H194 M5 263.500H194 M5 288.500H194 M5 437.500H194 M5 462.500H194" stroke="#c8c8c8"/></svg>
<div class="t" style="left:746.500px;top:305px;transform:scaleX(0.9702);transform-origin:0 0">Open Saved Log...</div>
<div class="t" style="left:746.500px;top:328.4px;transform:scaleX(0.9704);transform-origin:0 0">Create Custom View...</div>
<div class="t" style="left:746.500px;top:351.4px;transform:scaleX(0.9871);transform-origin:0 0">Import Custom View...</div>
<div class="t" style="left:746.500px;top:376px;transform:scaleX(0.9670);transform-origin:0 0">Clear Log...</div>
<div class="t" style="left:746.500px;top:400.8px;transform:scaleX(0.9919);transform-origin:0 0">Filter Current Log...</div>
<div class="t" style="left:746.500px;top:424.6px;transform:scaleX(0.9573);transform-origin:0 0">Properties</div>
<div class="t" style="left:746.500px;top:448.4px;transform:scaleX(0.9811);transform-origin:0 0">Find...</div>
<div class="t" style="left:746.500px;top:472.4px;transform:scaleX(0.9912);transform-origin:0 0">Save All Events As...</div>
<div class="t" style="left:746.500px;top:495.7px;transform:scaleX(0.9957);transform-origin:0 0">Attach a Task To this Log...</div>
<div class="t" style="left:746.500px;top:519.6px;transform:scaleX(0.9089);transform-origin:0 0">View</div>
<div class="t" style="left:746.500px;top:545px;transform:scaleX(0.9758);transform-origin:0 0">Refresh</div>
<div class="t" style="left:746.500px;top:570px;transform:scaleX(0.9061);transform-origin:0 0">Help</div>
<div class="t" style="left:746.500px;top:623px;transform:scaleX(0.9714);transform-origin:0 0">Event Properties</div>
<div class="t" style="left:746.500px;top:647px;transform:scaleX(0.9953);transform-origin:0 0">Attach Task To This Event...</div>
<div class="t" style="left:746.500px;top:671.4px;transform:scaleX(0.9343);transform-origin:0 0">Copy</div>
<div class="t" style="left:746.500px;top:694.4px;transform:scaleX(0.9761);transform-origin:0 0">Save Selected Events...</div>
<div class="t" style="left:746.500px;top:719px;transform:scaleX(0.9758);transform-origin:0 0">Refresh</div>
<div class="a" style="left:717px;top:740px;width:199px;height:13px;overflow:hidden"><div class="t" style="left:29.500px;top:4px;transform:scaleX(0.9061);transform-origin:0 0">Help</div></div>
<!-- action icons -->
<svg class="a" style="left:722px;top:305px" width="15" height="14.5" preserveAspectRatio="none"><use href="#openf"/></svg>
<svg class="a" style="left:722px;top:328px" width="15.5" height="15.5" preserveAspectRatio="none"><use href="#funstar"/></svg>
<svg class="a" style="left:722px;top:400.5px" width="15" height="14.5" preserveAspectRatio="none"><use href="#funnel"/></svg>
<svg class="a" style="left:722.5px;top:423.5px" width="14.5" height="15" preserveAspectRatio="none"><use href="#props"/></svg>
<svg class="a" style="left:721.5px;top:446.5px" width="16.5" height="16.5" preserveAspectRatio="none"><use href="#binoc"/></svg>
<svg class="a" style="left:722px;top:471px" width="16" height="16" preserveAspectRatio="none"><use href="#floppy"/></svg>
<svg class="a" style="left:723.5px;top:545px" width="14" height="15" preserveAspectRatio="none"><use href="#refresh"/></svg>
<svg class="a" style="left:723px;top:569.5px" width="12.7" height="15" preserveAspectRatio="none"><use href="#helpi"/></svg>
<svg class="a" style="left:722.5px;top:622.5px" width="14.5" height="15" preserveAspectRatio="none"><use href="#props"/></svg>
<svg class="a" style="left:721.5px;top:645.5px" width="16.5" height="16.5" preserveAspectRatio="none"><use href="#clock"/></svg>
<svg class="a" style="left:721.8px;top:670px" width="16.5" height="15.5" preserveAspectRatio="none"><use href="#copy"/></svg>
<svg class="a" style="left:722px;top:693px" width="16" height="16" preserveAspectRatio="none"><use href="#floppy"/></svg>
<svg class="a" style="left:723.5px;top:718.5px" width="14" height="15" preserveAspectRatio="none"><use href="#refresh"/></svg>
<div class="a" style="left:717px;top:740px;width:199px;height:13px;overflow:hidden"><svg class="a" style="left:6px;top:3px" width="12.700" height="15"><use href="#helpi"/></svg><svg class="a" style="left:186px;top:6px" width="6" height="10"><path d="M0 0V10L5 5Z" fill="#000"/></svg></div>
<!-- actions vscroll -->
<div class="a dot" style="left:916px;top:275px;width:16px;height:477px"></div>
<div class="btn" style="left:916px;top:275px;width:16px;height:15px"></div>
<div class="btn" style="left:916px;top:290px;width:16px;height:431px"></div>
<div class="btn" style="left:916px;top:736px;width:16px;height:16px"></div>
<svg class="a" style="left:916px;top:275px" width="16" height="477"><path d="M4 10H12L8 6Z M4 466.500H12L8 470.500Z" fill="#000"/></svg>
<!-- status bar -->
<div class="sunk" style="left:4px;top:756px;width:711px;height:18px"></div>
<div class="sunk" style="left:717px;top:756px;width:131px;height:18px"></div>
<div class="sunk" style="left:850px;top:756px;width:83px;height:18px"></div>

</body>
</html>
